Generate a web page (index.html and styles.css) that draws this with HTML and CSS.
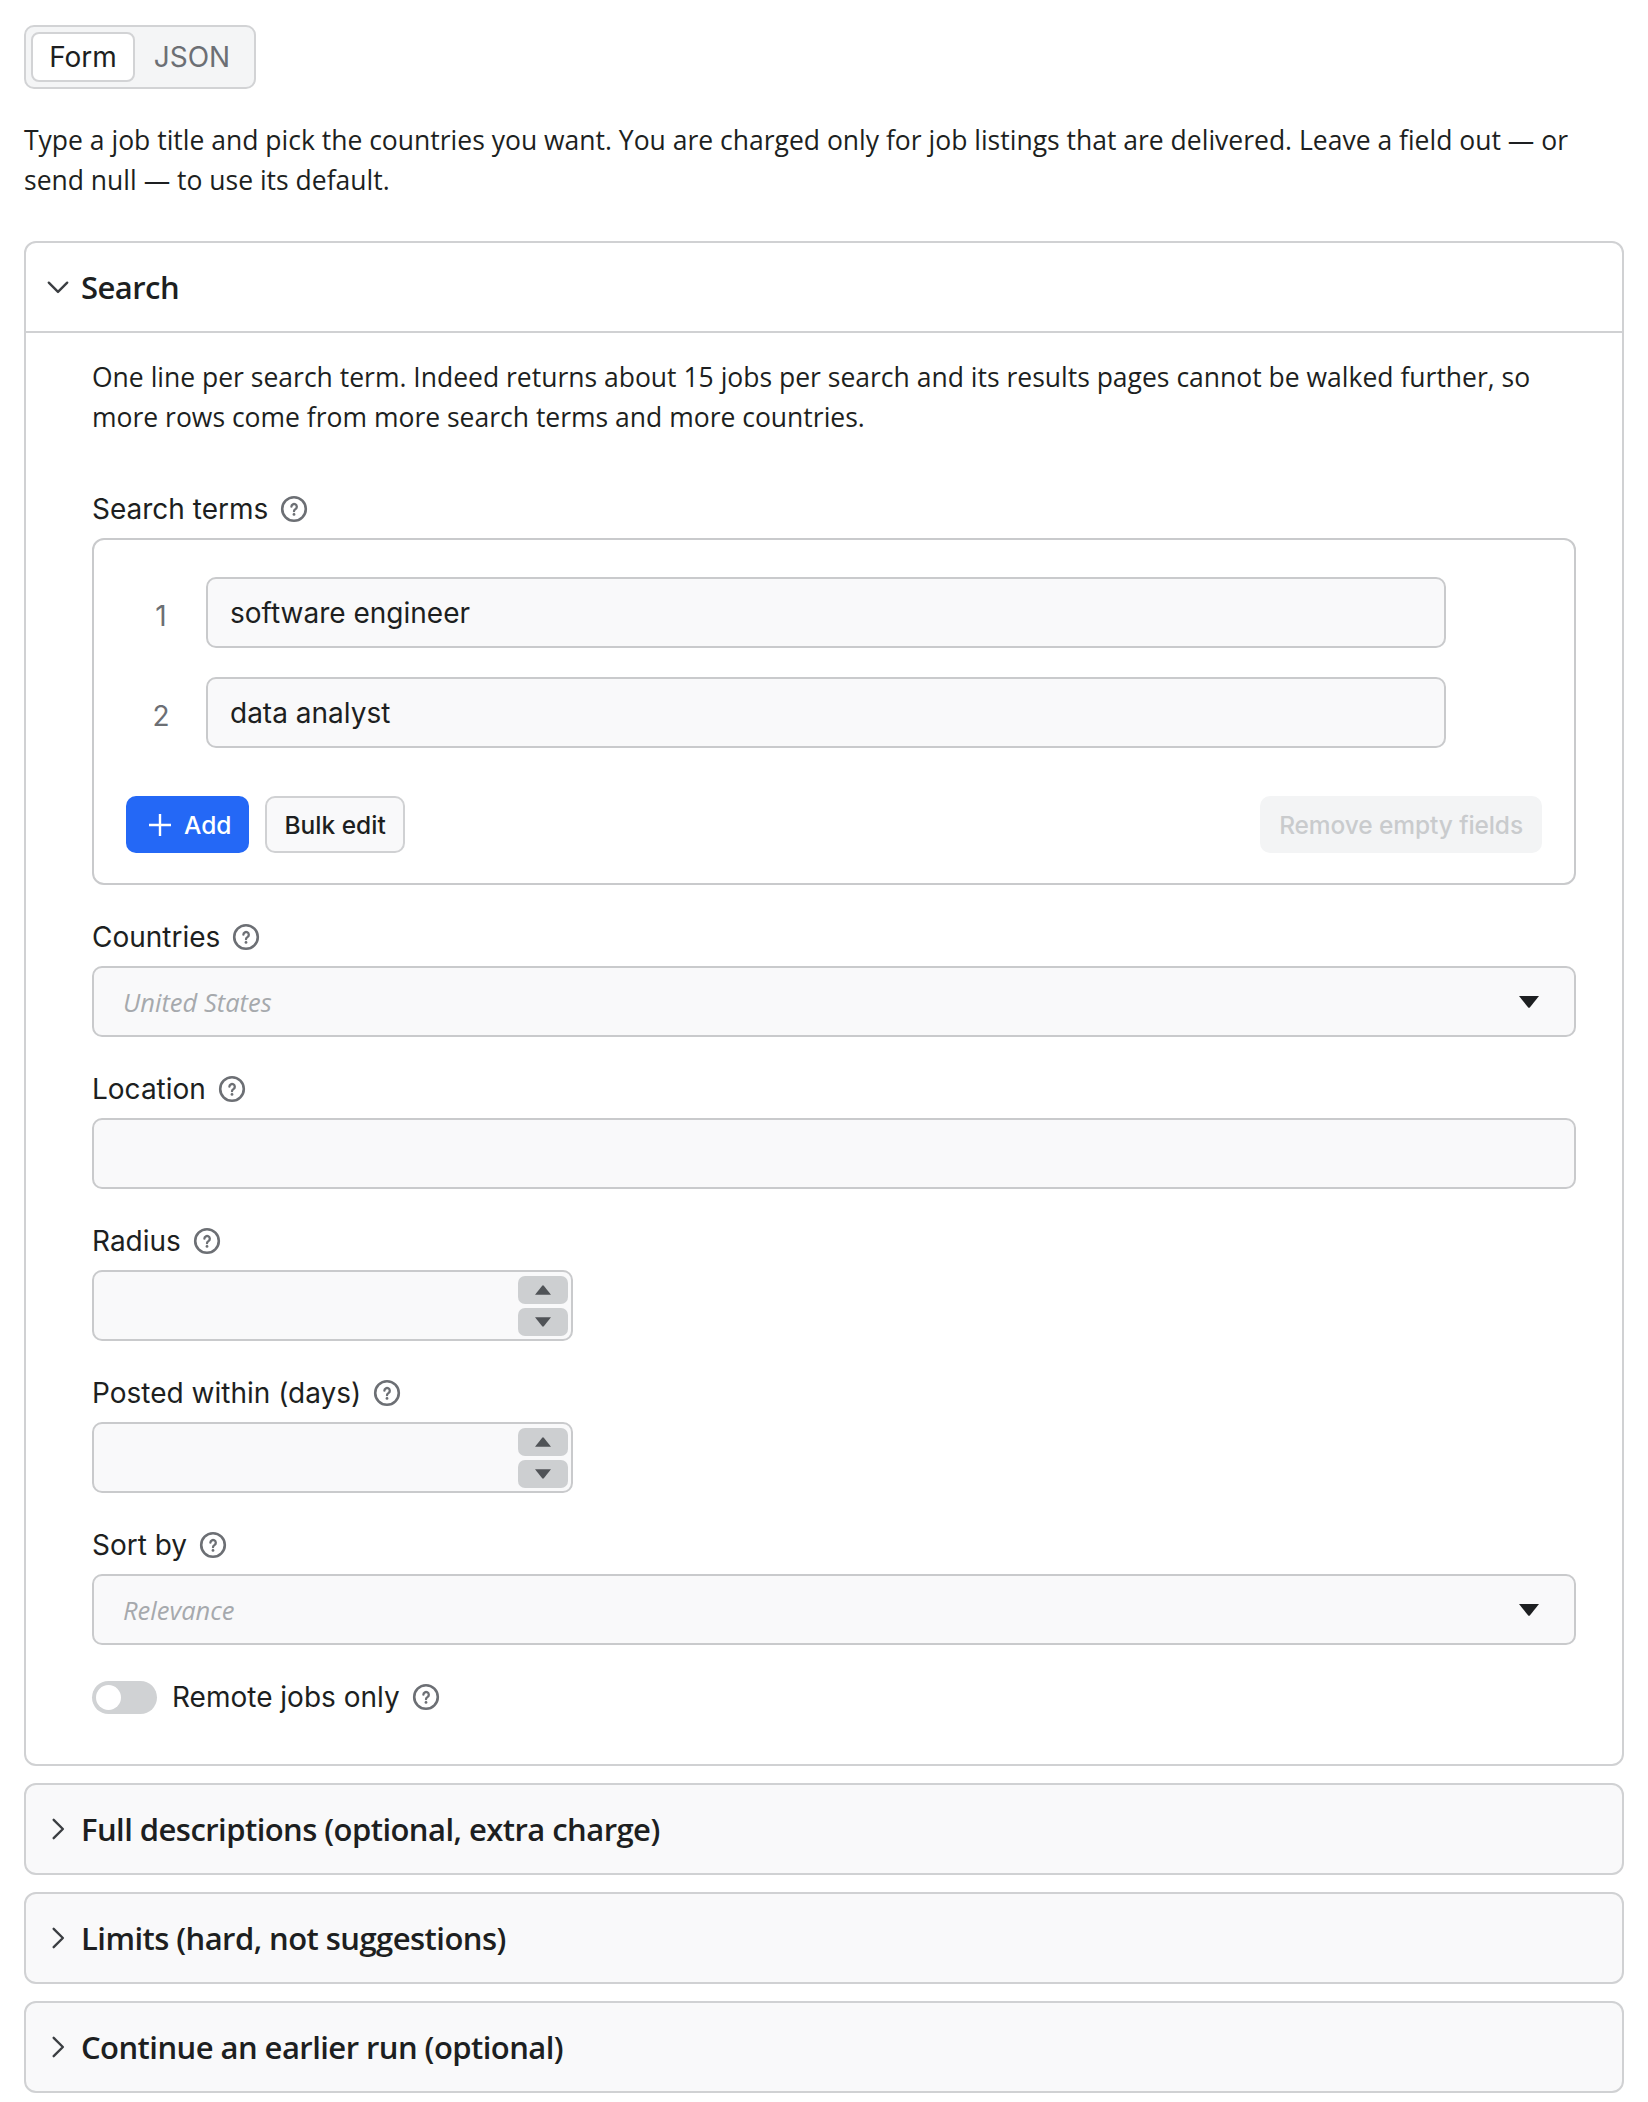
FILE: index.html
```html
<!DOCTYPE html>
<html lang="en">
<head>
<meta charset="utf-8">
<title>Input</title>
<link rel="stylesheet" href="styles.css">
</head>
<body>
<svg class="defs" width="0" height="0" aria-hidden="true">
  <symbol id="help" viewBox="0 0 28 28">
    <circle cx="14" cy="14" r="11.8" fill="none" stroke="currentColor" stroke-width="2.6"/>
    <path d="M11.4 11.7a2.7 2.7 0 1 1 4.3 2.2c-1 .7-1.7 1.2-1.7 2.3" fill="none" stroke="currentColor" stroke-width="2.3" stroke-linecap="round"/>
    <circle cx="14" cy="19.4" r="1.4" fill="currentColor"/>
  </symbol>
  <symbol id="caret" viewBox="0 0 20 12">
    <path d="M0 0h20L11 11.2a1.3 1.3 0 0 1-2 0z" fill="currentColor"/>
  </symbol>
  <symbol id="chev" viewBox="0 0 24 24">
    <path d="M3.5 8 12 16.5 20.500 8" fill="none" stroke="currentColor" stroke-width="2.2" stroke-linecap="round" stroke-linejoin="round"/>
  </symbol>
  <symbol id="chevr" viewBox="0 0 24 24">
    <path d="M8 3.500 16.500 12 8 20.500" fill="none" stroke="currentColor" stroke-width="2.2" stroke-linecap="round" stroke-linejoin="round"/>
  </symbol>
</svg>

<div class="tabs">
  <div class="tab tab-active">Form</div>
  <div class="tab">JSON</div>
</div>

<p class="intro">Type a job title and pick the countries you want. You are charged only for job listings that are delivered. Leave a field out — or send null — to use its default.</p>

<div class="sections">
  <section class="card">
    <header class="card-head card-head-open">
      <svg class="chev"><use href="#chev"/></svg>
      <h2 class="card-title">Search</h2>
    </header>
    <div class="card-body">
      <p class="lede">One line per search term. Indeed returns about 15 jobs per search and its results pages cannot be walked further, so more rows come from more search terms and more countries.</p>

      <div class="field field-first">
        <div class="label">Search terms <svg class="help"><use href="#help"/></svg></div>
        <div class="list-box">
          <div class="list-row">
            <span class="row-num">1</span>
            <div class="input input-row">software engineer</div>
          </div>
          <div class="list-row">
            <span class="row-num">2</span>
            <div class="input input-row">data analyst</div>
          </div>
          <div class="list-actions">
            <button class="btn btn-primary" type="button">
              <svg class="plus" viewBox="0 0 24 24"><path d="M12 1v22M1 12h22" fill="none" stroke="currentColor" stroke-width="2.4"/></svg>
              Add
            </button>
            <button class="btn btn-outline" type="button">Bulk edit</button>
            <button class="btn btn-disabled" type="button">Remove empty fields</button>
          </div>
        </div>
      </div>

      <div class="field">
        <div class="label">Countries <svg class="help"><use href="#help"/></svg></div>
        <div class="input select"><span class="placeholder">United States</span><svg class="caret"><use href="#caret"/></svg></div>
      </div>

      <div class="field">
        <div class="label">Location <svg class="help"><use href="#help"/></svg></div>
        <div class="input"></div>
      </div>

      <div class="field">
        <div class="label">Radius <svg class="help"><use href="#help"/></svg></div>
        <div class="input number">
          <div class="spin"><span class="spin-btn"><svg class="spin-up"><use href="#caret"/></svg></span><span class="spin-btn"><svg class="spin-down"><use href="#caret"/></svg></span></div>
        </div>
      </div>

      <div class="field">
        <div class="label">Posted within (days) <svg class="help"><use href="#help"/></svg></div>
        <div class="input number">
          <div class="spin"><span class="spin-btn"><svg class="spin-up"><use href="#caret"/></svg></span><span class="spin-btn"><svg class="spin-down"><use href="#caret"/></svg></span></div>
        </div>
      </div>

      <div class="field">
        <div class="label">Sort by <svg class="help"><use href="#help"/></svg></div>
        <div class="input select"><span class="placeholder">Relevance</span><svg class="caret"><use href="#caret"/></svg></div>
      </div>

      <div class="switch-row">
        <span class="switch"><span class="knob"></span></span>
        <div class="label label-inline">Remote jobs only <svg class="help"><use href="#help"/></svg></div>
      </div>
    </div>
  </section>

  <section class="card card-closed">
    <header class="card-head">
      <svg class="chev"><use href="#chevr"/></svg>
      <h2 class="card-title">Full descriptions (optional, extra charge)</h2>
    </header>
  </section>
  <section class="card card-closed">
    <header class="card-head">
      <svg class="chev"><use href="#chevr"/></svg>
      <h2 class="card-title">Limits (hard, not suggestions)</h2>
    </header>
  </section>
  <section class="card card-closed">
    <header class="card-head">
      <svg class="chev"><use href="#chevr"/></svg>
      <h2 class="card-title">Continue an earlier run (optional)</h2>
    </header>
  </section>
</div>
</body>
</html>
```

FILE: styles.css
```css
* { box-sizing: border-box; }
html, body { margin: 0; background: #fff; }
body {
  padding: 25px 24px 11px;
  font-family: "Inter", "Liberation Sans", sans-serif;
  color: #1d1f21;
  font-size: 28px;
}
.defs { position: absolute; }

.tabs {
  display: inline-flex;
  width: 232px;
  height: 64px;
  padding: 5px;
  background: #f4f5f6;
  border: 2px solid #d2d3d5;
  border-radius: 10px;
}
.tab {
  display: flex;
  align-items: center;
  justify-content: center;
  width: 104px;
  height: 50px;
  padding-bottom: 1px;
  font-size: 28px;
  color: #6c6f74;
}
.tab + .tab { flex: 1; }
.tab-active {
  background: #fff;
  border: 2px solid #d2d3d5;
  border-radius: 8px;
  color: #1d1f21;
}

.intro {
  margin: 31px 0 0;
  font-family: "Open Sans", sans-serif;
  font-size: 26.5px;
  line-height: 40px;
}

.sections {
  display: flex;
  flex-direction: column;
  gap: 17px;
  margin-top: 41px;
}
.card {
  border: 2px solid #d0d1d3;
  border-radius: 12px;
  background: #fff;
}
.card-closed { background: #f9f9fa; }
.card-head {
  display: flex;
  align-items: center;
  gap: 10px;
  height: 88px;
  padding: 0 0 0 19px;
}
.card-head-open { border-bottom: 2px solid #d0d1d3; height: 90px; }
.chev { width: 26px; height: 26px; color: #3b3e42; flex: none; }
.card-title {
  margin: 0;
  font-family: "Open Sans", sans-serif;
  font-size: 31px;
  font-weight: 600;
  letter-spacing: -0.55px;
  color: #1d1f21;
}
.card-body { padding: 24px 46px 50px 66px; }

.lede {
  margin: 0;
  font-family: "Open Sans", sans-serif;
  font-size: 26.5px;
  line-height: 40px;
}

.field { margin-top: 35px; }
.field-first { margin-top: 55px; }
.label {
  display: flex;
  align-items: center;
  gap: 12px;
  height: 34px;
  margin-bottom: 12px;
  font-size: 28px;
}
.label-inline { margin: 0; }
.help { width: 28px; height: 28px; color: #6c6f74; flex: none; }

.input {
  height: 71px;
  padding: 0 22px;
  display: flex;
  align-items: center;
  background: #f9f9fa;
  border: 2px solid #c9cacc;
  border-radius: 10px;
  font-size: 28px;
}
.placeholder {
  padding-left: 7px;
  font-family: "Open Sans", sans-serif;
  font-style: italic;
  font-size: 25.5px;
  color: #a6a9ad;
}
.select { justify-content: space-between; }
.caret { width: 20px; height: 12px; color: #1d1f21; margin-right: 13px; }
.number { width: 481px; justify-content: flex-end; padding: 0 3px 0 0; }

.list-box {
  height: 347px;
  padding: 37px 32px 0 32px;
  border: 2px solid #c9cacc;
  border-radius: 12px;
}
.list-row {
  display: flex;
  align-items: center;
  margin-bottom: 29px;
  width: 1320px;
}
.row-num {
  width: 80px;
  padding: 6px 10px 0 0;
  text-align: center;
  font-size: 28px;
  color: #6c6f74;
}
.input-row { flex: 1; padding: 0 22px; }
.list-actions {
  display: flex;
  align-items: center;
  gap: 16px;
  margin-top: 48px;
}
.btn {
  height: 57px;
  padding: 0 17px;
  display: inline-flex;
  align-items: center;
  border-radius: 10px;
  font-family: "Inter", sans-serif;
  font-size: 24.5px;
  font-weight: 500;
  border: 2px solid transparent;
}
.btn-primary { background: #2468f6; color: #fff; gap: 12px; padding: 0 16px 0 20px; }
.plus { width: 24px; height: 24px; }
.btn-outline { background: #f9f9fa; border-color: #d0d1d3; color: #1d1f21; }
.btn-disabled {
  margin-left: auto;
  background: #f3f4f5;
  color: #c9cbcd;
  font-weight: 500;
  letter-spacing: -0.1px;
}

.switch-row {
  display: flex;
  align-items: center;
  gap: 15px;
  margin-top: 35px;
}
.switch {
  width: 65px;
  height: 33px;
  display: flex;
  align-items: center;
  padding: 0 4px;
  background: #d0d2d4;
  border-radius: 17px;
}
.knob { width: 25px; height: 25px; background: #fff; border-radius: 50%; }

.spin { display: flex; flex-direction: column; gap: 4px; }
.spin-btn {
  display: flex;
  align-items: center;
  justify-content: center;
  width: 50px;
  height: 28px;
  background: #cdcfd1;
  border-radius: 7px;
}
.spin-up { width: 16px; height: 10px; color: #505357; transform: rotate(180deg); }
.spin-down { width: 16px; height: 10px; color: #505357; }
```
